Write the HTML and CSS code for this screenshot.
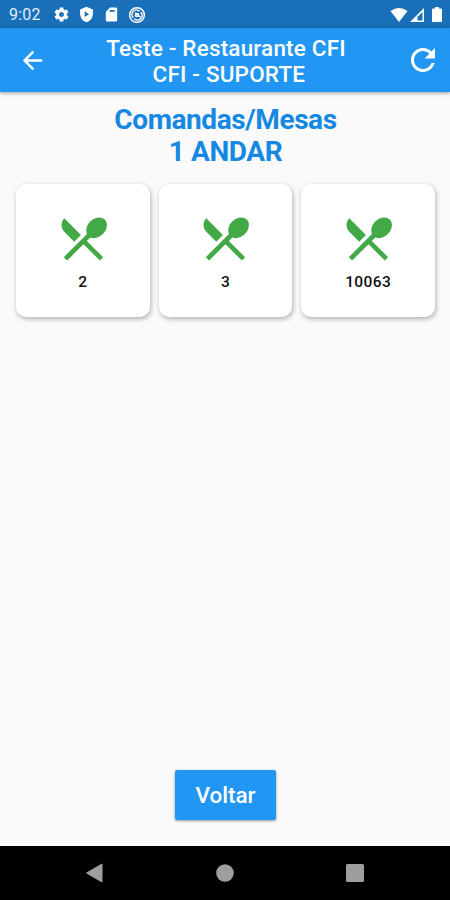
FILE: index.html
```html
<!DOCTYPE html>
<html lang="pt-BR">
  <head>
    <meta charset="UTF-8" />
    <meta name="viewport" content="width=device-width, initial-scale=1.0" />
    <title>Comandas/Mesas</title>
    <link rel="stylesheet" href="styles.css">
  </head>

  <body>
    <div class="status">
      <span class="time">9:02</span>
      <div class="status-icons">
        <svg width="17" height="17" viewBox="0 0 24 24"><path d="M19.43 12.98c.04-.32.07-.64.07-.98s-.03-.66-.07-.98l2.11-1.65c.19-.15.24-.42.12-.64l-2-3.46c-.12-.22-.39-.3-.61-.22l-2.49 1c-.52-.4-1.08-.73-1.69-.98l-.38-2.65C14.46 2.18 14.25 2 14 2h-4c-.25 0-.46.18-.49.42l-.38 2.65c-.61.25-1.17.59-1.69.98l-2.49-1c-.23-.09-.49 0-.61.22l-2 3.46c-.13.22-.07.49.12.64l2.11 1.65c-.04.32-.07.65-.07.98s.03.66.07.98l-2.11 1.65c-.19.15-.24.42-.12.64l2 3.46c.12.22.39.3.61.22l2.49-1c.52.4 1.08.73 1.69.98l.38 2.65c.03.24.24.42.49.42h4c.25 0 .46-.18.49-.42l.38-2.65c.61-.25 1.17-.59 1.69-.98l2.49 1c.23.09.49 0 .61-.22l2-3.46c.12-.22.07-.49-.12-.64l-2.11-1.65zM12 15.5c-1.93 0-3.5-1.57-3.5-3.5s1.57-3.5 3.5-3.5 3.5 1.57 3.5 3.5-1.57 3.5-3.5 3.5z"/></svg>
        <svg width="17" height="17" viewBox="0 0 24 24"><path fill-rule="evenodd" d="M12 1L3 5v6c0 5.55 3.84 10.74 9 12 5.16-1.26 9-6.45 9-12V5l-9-4zM9.500 7.500l6 4-6 4z"/></svg>
        <svg width="17" height="17" viewBox="0 0 24 24"><path fill-rule="evenodd" d="M18 2h-8L4 8v12c0 1.100.9 2 2 2h12c1.100 0 2-.9 2-2V4c0-1.100-.9-2-2-2zM9.500 5.500h7V8h-7z"/></svg>
        <svg class="sync" width="18" height="18" viewBox="0 0 24 24"><circle cx="12" cy="12" r="9.800"/><path d="M7 15.500a6 6 0 0 1 8.500-8.500M17 8.500a6 6 0 0 1-8.500 8.500M9 9l8 6"/><circle cx="12" cy="12" r="2"/></svg>
      </div>
      <div class="signal">
        <svg width="18" height="14" viewBox="0 0 17 14"><path d="M0 3Q8.500-3 17 3L8.500 14z"/></svg>
        <svg width="14" height="14" viewBox="0 0 14 14"><path fill-rule="evenodd" d="M14 0v14H0zM12.500 4L7.500 9v3.500h5z"/></svg>
        <svg width="10" height="15" viewBox="0 0 10 15"><path d="M3 0h4v1.500h2q1 0 1 1V14q0 1-1 1H1q-1 0-1-1V2.500q0-1 1-1h2z"/></svg>
      </div>
    </div>

    <header class="topbar">
      <svg class="back" width="29" height="29" viewBox="0 0 24 24"><path d="M20 11H7.830l5.590-5.590L12 4l-8 8 8 8 1.410-1.410L7.830 13H20v-2z"/></svg>
      <div class="topbar-title">Teste - Restaurante CFI<br>&nbsp;CFI - SUPORTE</div>
      <svg class="refresh" width="36" height="36" viewBox="0 0 24 24"><path d="M17.650 6.350C16.200 4.900 14.210 4 12 4c-4.420 0-7.990 3.580-7.990 8s3.570 8 7.990 8c3.730 0 6.840-2.550 7.730-6h-2.080c-.82 2.330-3.040 4-5.650 4-3.310 0-6-2.690-6-6s2.690-6 6-6c1.660 0 3.140.69 4.220 1.780L13 11h7V4l-2.350 2.350z"/></svg>
    </header>

    <main class="content">
      <h1>Comandas/Mesas<br>1 ANDAR</h1>
      <div class="mesas">
        <div class="mesa">
          <svg width="57" height="57" viewBox="0 0 24 24"><path d="M8.100 13.340l2.830-2.830L3.910 3.500c-1.560 1.560-1.560 4.090 0 5.660l4.190 4.180zm6.780-1.810c1.530.71 3.680.21 5.270-1.380 1.910-1.910 2.280-4.650.81-6.120-1.460-1.460-4.200-1.100-6.120.81-1.590 1.590-2.090 3.740-1.380 5.270L3.700 19.870l1.410 1.410L12 14.410l6.880 6.880 1.410-1.410L13.410 13l1.470-1.470z"/></svg>
          <span>2</span>
        </div>
        <div class="mesa">
          <svg width="57" height="57" viewBox="0 0 24 24"><path d="M8.100 13.340l2.830-2.830L3.910 3.500c-1.560 1.560-1.560 4.090 0 5.660l4.190 4.180zm6.780-1.810c1.530.71 3.680.21 5.270-1.380 1.910-1.910 2.280-4.650.81-6.120-1.460-1.460-4.200-1.100-6.120.81-1.590 1.590-2.090 3.740-1.380 5.270L3.700 19.870l1.410 1.410L12 14.410l6.880 6.880 1.410-1.410L13.410 13l1.470-1.470z"/></svg>
          <span>3</span>
        </div>
        <div class="mesa">
          <svg width="57" height="57" viewBox="0 0 24 24"><path d="M8.100 13.340l2.830-2.830L3.910 3.500c-1.560 1.560-1.560 4.090 0 5.660l4.190 4.180zm6.780-1.810c1.530.71 3.680.21 5.270-1.380 1.910-1.910 2.280-4.650.81-6.120-1.460-1.460-4.200-1.100-6.120.81-1.590 1.590-2.090 3.740-1.380 5.270L3.700 19.870l1.410 1.410L12 14.410l6.880 6.880 1.410-1.410L13.410 13l1.470-1.470z"/></svg>
          <span>10063</span>
        </div>
      </div>
      <button type="button" class="voltar">Voltar</button>
    </main>

    <nav class="navbar">
      <svg width="20" height="20" viewBox="0 0 20 20"><path d="M17 1v18L1.500 10z" stroke="#9e9e9e" stroke-linejoin="round"/></svg>
      <svg width="20" height="20" viewBox="0 0 20 20"><circle cx="10" cy="10" r="8.800"/></svg>
      <svg width="20" height="20" viewBox="0 0 20 20"><rect x="1" y="1" width="18" height="18" rx="1.500"/></svg>
    </nav>
  </body>
</html>
```
FILE: styles.css
```css
* {
  padding: 0;
  margin: 0;
  box-sizing: border-box;
}

body {
  display: flex;
  flex-direction: column;
  height: 100vh;
  overflow: hidden;
  background-color: #fafafa;
  font-family: Roboto, sans-serif;
}

svg {
  display: block;
  flex: none;
}

/* status bar */
.status {
  display: flex;
  align-items: center;
  height: 28px;
  padding: 1px 8px 0 9px;
  background-color: #1a70b8;
  color: #e3eef8;
  fill: white;
}

.time {
  width: 44px;
  font-size: 16px;
  letter-spacing: 0.2px;
}

.status-icons {
  display: flex;
  align-items: center;
  gap: 8px;
}

.sync {
  fill: none;
  stroke: white;
  stroke-width: 2;
}

.signal {
  display: flex;
  align-items: center;
  margin-left: auto;
}

.signal svg + svg {
  margin-left: 2px;
}

.signal svg:last-child {
  margin-left: 8px;
}

/* app bar */
.topbar {
  display: flex;
  align-items: center;
  justify-content: space-between;
  height: 64px;
  padding: 0 9px 0 18px;
  background-color: #2196f3;
  color: white;
  fill: white;
  box-shadow: 0 1px 4px rgba(0, 0, 0, 0.4);
}

.topbar-title {
  padding-top: 1px;
  font-size: 22.5px;
  font-weight: 500;
  letter-spacing: 0.18px;
  line-height: 26px;
  text-align: center;
}

/* tables */
.content {
  display: flex;
  flex: 1;
  flex-direction: column;
  align-items: center;
  padding: 12px 15px 26px 16px;
}

h1 {
  color: #1588e2;
  font-size: 28px;
  font-weight: 700;
  letter-spacing: -0.4px;
  line-height: 32px;
  text-align: center;
}

.mesas {
  display: grid;
  grid-template-columns: repeat(3, 1fr);
  gap: 9px;
  width: 100%;
  margin-top: 16px;
}

.mesa {
  display: flex;
  flex-direction: column;
  align-items: center;
  height: 133px;
  padding-top: 26px;
  border-radius: 10px;
  background-color: white;
  box-shadow: 1px 2px 5px rgba(0, 0, 0, 0.3);
  fill: #43a947;
}

.mesa svg {
  margin-left: 1px;
}

.mesa span {
  margin-top: 6px;
  color: #111;
  font-size: 15.5px;
  font-weight: 500;
  letter-spacing: 0.4px;
  line-height: 18px;
}

.voltar {
  width: 101px;
  height: 50px;
  margin-top: auto;
  border: none;
  border-radius: 2px;
  background-color: #2196f3;
  color: white;
  font-family: inherit;
  font-size: 22.5px;
  font-weight: 500;
  box-shadow: 0 1px 3px rgba(0, 0, 0, 0.4);
}

/* android buttons */
.navbar {
  display: flex;
  justify-content: space-between;
  align-items: center;
  height: 54px;
  padding: 0 85px;
  background-color: black;
  fill: #9e9e9e;
}
```
